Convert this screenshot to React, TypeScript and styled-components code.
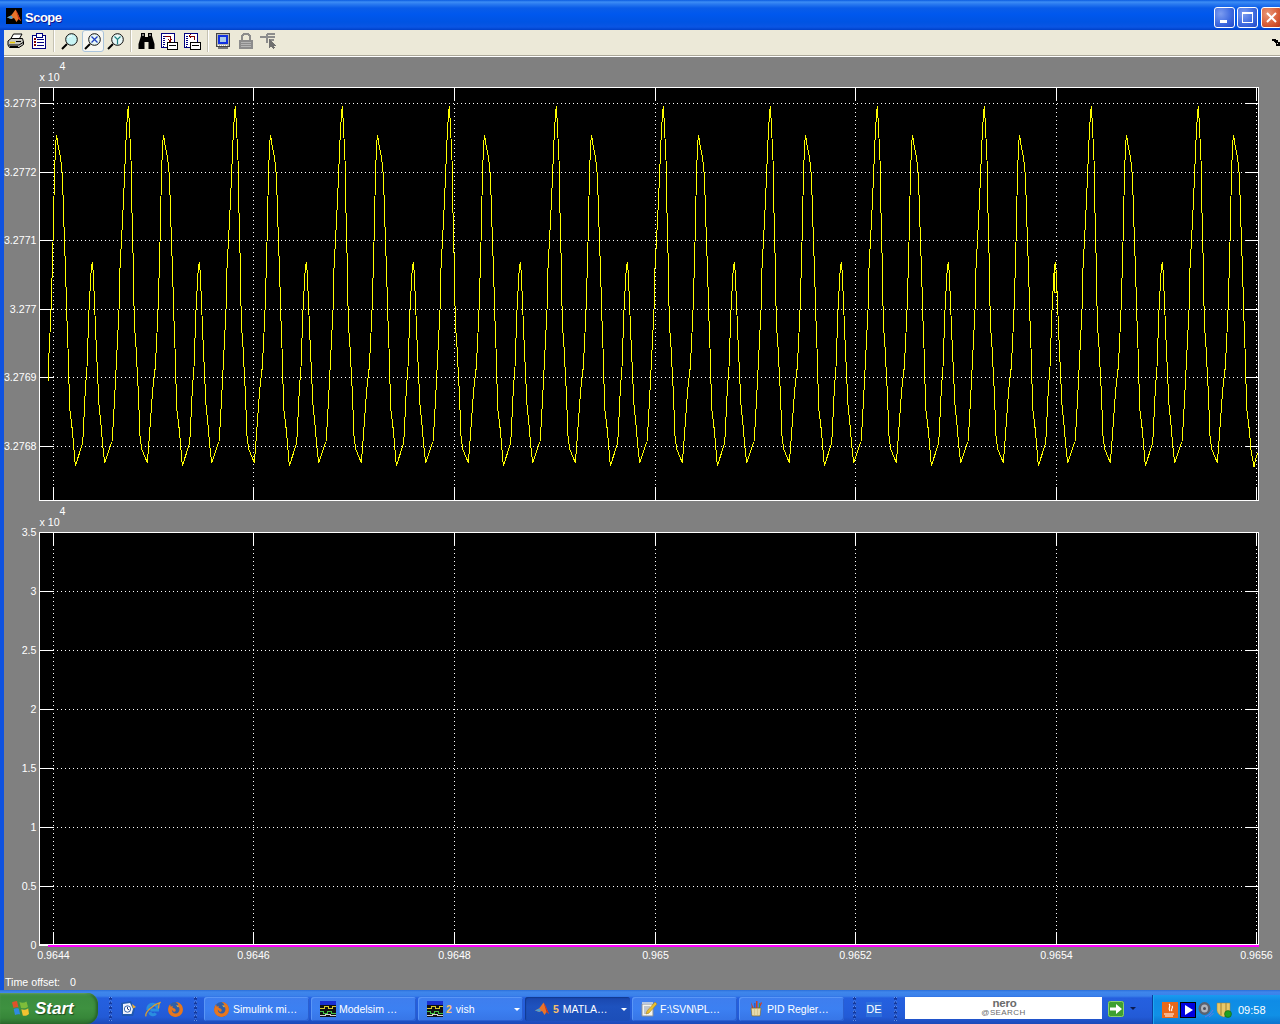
import React from "react";
import styled, { createGlobalStyle } from "styled-components";

const Global = createGlobalStyle`
  html, body { margin: 0; padding: 0; width: 1280px; height: 1024px; overflow: hidden; background: #808080; }
  #root { width: 1280px; height: 1024px; }
  * { box-sizing: border-box; }
`;

const Screen = styled.div`
  width: 1280px; height: 1024px; display: flex; flex-direction: column; overflow: hidden;
  font-family: "Liberation Sans", Arial, sans-serif;
`;
const Win = styled.div`
  height: 990px; display: flex; flex-direction: column;
  border-left: 4px solid #0f52e0;
`;
const TitleBar = styled.div`
  height: 30px; margin-left: -4px; width: 1280px; display: flex; align-items: center; padding: 4px 0 0 6px;
  overflow: hidden;
  background: linear-gradient(#0a5be0 0, #3d8df5 2px, #2a7af0 4px, #0a5ce8 8px, #0058ee 14px, #0054e3 22px, #0a55e4 27px, #0040c8 30px);
`;
const TitleIcon = styled.div`
  margin-top: -2px; display: flex;
`;
const TitleText = styled.span`
  font-size: 13px; font-weight: 700; letter-spacing: -.5px; color: #fff; margin-left: 3px; text-shadow: 1px 1px #0f1089;
`;
const WinButtons = styled.div`
  margin-left: auto; display: flex; gap: 2px; margin-right: -2px; align-items: center;
`;
const WinBtn = styled.div<{ $red?: boolean }>`
  width: 21px; height: 21px; border: 1px solid #fff; border-radius: 3px; display: flex; align-items: center; justify-content: center;
  background: ${p => p.$red
    ? "radial-gradient(circle at 30% 30%, #e8987a, #d9603a 55%, #b8351a)"
    : "radial-gradient(circle at 30% 30%, #7c9cf0, #3f6be0 55%, #2248c8)"};
  margin-left: ${p => (p.$red ? "1px" : "0")};
`;
const ToolBar = styled.div`
  height: 26px; background: #ece9d8; display: flex; align-items: center; padding-bottom: 3px; flex: none;
  border-bottom: 1px solid #aca899; box-shadow: 0 1px 0 #fff; position: relative; z-index: 1;
`;
const ToolBtn = styled.div<{ $active?: boolean }>`
  width: 23px; height: 23px; display: flex; align-items: center; justify-content: center; flex: none;
  ${p => p.$active ? "background:#f7f6f1; border:1px solid #a9c4dc; border-radius:3px; width:22px; height:22px; margin:0 .5px;" : ""}
`;
const ToolSep = styled.div<{ $mr?: number }>`
  width: 2px; height: 22px; background: #c5c2b2; border-right: 1px solid #fff; margin: 0 ${p => p.$mr ?? 3}px 0 3px; flex: none;
`;
const ToolEnd = styled.div`
  margin-left: auto; margin-top: 3px; display: flex; align-items: center;
`;
const ScopeArea = styled.div`
  flex: 1; background: #808080; margin-top: 1px; display: flex; flex-direction: column;
`;
const PlotSvg = styled.svg`
  display: block; flex: none;
  text { font-family: "Liberation Sans", Arial, sans-serif; font-size: 10.67px; fill: #fff; }
`;
const Status = styled.div`
  height: 18px; padding: 4px 0 0 1px; color: #fff; font-size: 10.67px; line-height: 12px; display: flex;
`;
const StatusValue = styled.span`
  margin-left: 10px;
`;
const Taskbar = styled.div`
  height: 34px; width: 1280px; display: flex; align-items: flex-start; position: relative;
  background: linear-gradient(#2c6fd8 0, #3f86ec 2px, #3a80ea 6px, #2560df 8px, #245edc 18px, #225ad6 27px, #1c49b8 34px);
`;
const StartBtn = styled.div`
  width: 98px; height: 31px; margin-top: 3px; flex: none; display: flex; align-items: center; padding-left: 10px; gap: 5px;
  border-radius: 0 11px 12px 0;
  background: linear-gradient(#4e9a50 0, #3c8d3f 12%, #3e9140 50%, #378739 80%, #2d6e30 100%);
  box-shadow: inset -2px 0 3px #255f27, inset 0 1px 1px #7cbc7c;
`;
const StartText = styled.span`
  color: #fff; font-style: italic; font-weight: 700; font-size: 17px; text-shadow: 1px 1px 1px #1c4a1e;
`;
const Grip = styled.div<{ $ml: number }>`
  width: 4px; height: 24px; margin: 7px 0 0 ${p => p.$ml}px; flex: none;
  background-image: radial-gradient(circle at 1.5px 1.5px, #12379c 1.3px, #6f9ef2 1.4px, transparent 2px);
  background-size: 4px 4.6px;
`;
const Quick = styled.div<{ $ml: number }>`
  width: 16px; height: 16px; margin: 11px 0 0 ${p => p.$ml}px; flex: none; display: flex;
`;
const TaskBtn = styled.div<{ $active?: boolean; $ml?: number }>`
  width: 105px; height: 24px; margin: 7px 0 0 ${p => p.$ml ?? 2}px; flex: none; display: flex; align-items: center; padding-left: 9px;
  border-radius: 3px; color: #fff; font-size: 10.5px; white-space: nowrap; position: relative;
  background: ${p => p.$active ? "linear-gradient(#1a47ad, #1e52be 40%, #1c4eb8)" : "linear-gradient(#3f7eee, #3c80f2 50%, #3775e6)"};
  box-shadow: ${p => p.$active ? "inset 1px 1px 1px #123a90" : "inset 1px 1px 0 #5a96f6, inset -1px -1px 0 #2a5fd0"};
`;
const TaskLabel = styled.span`
  margin-left: 3px;
`;
const Count = styled.b`
  color: #f9c06a; font-weight: 700; margin-right: 4px; margin-left: 3px;
`;
const Caret = styled.i`
  position: absolute; right: 3px; top: 11px; width: 0; height: 0;
  border-left: 3px solid transparent; border-right: 3px solid transparent; border-top: 3px solid #fff;
`;
const Lang = styled.div`
  width: 16px; height: 15px; margin: 12px 0 0 9px; flex: none; background: #2f6fdc; color: #fff; font-size: 11px; line-height: 15px; text-align: center;
`;
const NeroBox = styled.div`
  width: 197px; height: 22px; margin: 7px 0 0 7px; background: #fff; flex: none; display: flex; flex-direction: column; align-items: center; justify-content: center; color: #6a6a6a;
`;
const NeroTop = styled.span`
  font-size: 11.5px; font-weight: 700; line-height: 9px; letter-spacing: -.2px; margin-left: 2px;
`;
const NeroBottom = styled.span`
  font-size: 8px; line-height: 9px; letter-spacing: .4px;
`;
const GoArrow = styled.div`
  width: 16px; height: 16px; margin: 11px 0 0 6px; flex: none;
`;
const SmallCaret = styled.i`
  width: 0; height: 0; margin: 17px 0 0 6px; flex: none;
  border-left: 3px solid transparent; border-right: 3px solid transparent; border-top: 3px solid #0a1a50;
`;
const Tray = styled.div`
  margin: 5px 0 0 auto; width: 128px; height: 29px; display: flex; align-items: center; padding-left: 9px; gap: 2px;
  background: linear-gradient(#1a9af0, #0f8ce6 20%, #1090e6 70%, #0c74ce);
  border-left: 1px solid #0a3fa0; box-shadow: inset 1px 0 0 #1ea8f0;
`;
const Clock = styled.span`
  color: #fff; font-size: 11px; margin-left: 4px;
`;
const Ico = styled.svg`
  display: block; flex: none;
`;

/* icons */
const MatlabLogo = ({ size = 16, bg = false }: { size?: number; bg?: boolean }) => (
  <Ico width={size} height={size} viewBox="0 0 16 16">
    {bg && <rect width="16" height="16" fill="#000" />}
    <path d="M1 9.500L5 7.500 7 5 9.500 1.500 11.500 5 15 13 12.500 11 10.500 14 8 10 5.500 11z" fill="#e8742a" />
    <path d="M1 9.500L5 7.500 7 9 5.500 11z" fill="#4d9fd0" />
    <path d="M9.500 1.500L11.500 5 15 13 12.500 11 11 6z" fill="#c8301a" />
  </Ico>
);
const Firefox = () => (
  <Ico width="17" height="17" viewBox="0 0 16 16">
    <circle cx="8" cy="8" r="7" fill="#2f5fa8" />
    <path d="M8 1C12 1 15 4 15 8S12 15 8 15 1 12 1 8C1 6 2 4 3 3L3.500 5.500 5.500 4.500C4.500 7 6 6.500 7 7S9 9 7.500 10 5 8.500 4.500 8C4.500 11 7 12.500 9.500 11.500S12.500 7 10.500 5C11 3.500 10 2 8 1z" fill="#e8761e" />
    <path d="M8.500 4L11 4.500 10.500 6z" fill="#f8c040" />
  </Ico>
);
const IE = () => (
  <Ico width="17" height="17" viewBox="0 0 16 16">
    <path d="M3.500 8.500A4.700 4.700 0 1 1 12.800 8.500H6M5.500 10.500A3 3 0 0 0 11 11.500" fill="none" stroke="#2a8fe0" strokeWidth="2.800" />
    <path d="M2 14.500C0 11 9 3 15 1.500 13 4 14.500 5 13.500 7" fill="none" stroke="#d8a030" strokeWidth="1.200" />
  </Ico>
);
const Desk = () => (
  <Ico width="16" height="16" viewBox="0 0 16 16">
    <path d="M1 2L11 0 15 8 13 15 2 15z" fill="#1f58b0" />
    <path d="M3 3L10 2 13 8 11.500 13 3 13z" fill="#eef2fa" />
    <circle cx="7.500" cy="8" r="3.200" fill="#fff" stroke="#3a6ab0" />
    <path d="M7.500 5.800V8L9.300 9" fill="none" stroke="#203a80" />
    <path d="M12 3L16 6 13 7.500z" fill="#f0b030" />
  </Ico>
);
const ModelSim = () => (
  <Ico width="16" height="16" viewBox="0 0 16 16" shapeRendering="crispEdges">
    <rect width="16" height="16" fill="#111" />
    <rect width="16" height="4" y="0" fill="#1a2fd0" />
    <path d="M0 7H4V5H8V7H12V5H16" fill="none" stroke="#d8c830" />
    <path d="M0 10H3V12H7V10H11V12H16" fill="none" stroke="#40c040" />
    <path d="M0 14H5V13H10V14H16" fill="none" stroke="#d0d0d0" />
  </Ico>
);
const Notepad = () => (
  <Ico width="16" height="16" viewBox="0 0 16 16">
    <path d="M1 3H12V15H1z" fill="#f4f4ee" stroke="#8a9098" />
    <path d="M3 6H9M3 8H8M3 10H7M3 12H8" stroke="#8898b0" />
    <path d="M1 3H12V1H1z" fill="#b8c8e0" />
    <path d="M14 1L16 3 8 12 5 13 6 10z" fill="#e8c030" stroke="#a07820" strokeWidth=".5" />
  </Ico>
);
const Paint = () => (
  <Ico width="16" height="16" viewBox="0 0 16 16">
    <path d="M3 1L6 8H4zM8 0H9.500V8H8zM13 1L14 2 11 8H10z" fill="#d04020" />
    <path d="M6 2H7.500V8H6z" fill="#3060c0" />
    <path d="M11 2H12V8H11z" fill="#40a040" />
    <path d="M3 7H13L12 15H4z" fill="#d8c890" stroke="#806a30" strokeWidth=".6" />
    <path d="M5 8V14M8 8V14M11 8V14" stroke="#f4ecc8" />
  </Ico>
);
const NeroGo = () => (
  <Ico width="16" height="16" viewBox="0 0 16 16">
    <rect width="16" height="16" rx="2" fill="#3ea030" />
    <rect x=".5" y=".5" width="15" height="15" rx="2" fill="none" stroke="#8ad070" />
    <path d="M2 6.500H8V3L14 8 8 13V9.500H2z" fill="#fff" />
  </Ico>
);
const Flag = () => (
  <Ico width="20" height="20" viewBox="0 0 20 20">
    <path d="M7 2C5 2 3 3 2 3.500L3.500 9C5 8 7 8 8.500 8.500z" fill="#e0512a" />
    <path d="M9.500 3C11.500 4 14 4 16.500 2.500L18 8C16 9.500 13 9.500 11 9z" fill="#7ebd3a" />
    <path d="M8.700 9.500C7 9 5 9 3.700 10L5 16C7 15 8.500 15 10.200 15.500z" fill="#2f8ae0" />
    <path d="M11.300 10.300C13 11 16 11 18.200 9.200L19 15C17 17 14 17 12.800 16.500z" fill="#f2c230" />
  </Ico>
);
const Printer = () => (
  <Ico width="17" height="16" viewBox="0 0 17 16">
    <path d="M6.500 1H15L12.500 5.500H4z" fill="#fff" stroke="#000" />
    <path d="M1 8L4 5.500H15.500L16.500 9V11.500L12 14.500H2.500L1 12z" fill="#c8c8c0" stroke="#000" />
    <path d="M2 12H12L16 9.500" fill="none" stroke="#000" />
    <path d="M3 9.500H8" stroke="#e8c800" strokeWidth="1.500" />
    <path d="M9 8.500H14M3 13.500H11" stroke="#000" />
  </Ico>
);
const Clip = () => (
  <Ico width="16" height="16" viewBox="0 0 16 16" shapeRendering="crispEdges">
    <path d="M1.500 2.500H14.500V15.500H1.500z" fill="#fff" stroke="#000080" />
    <path d="M5 .5H11V4H5z" fill="#fff" stroke="#000080" />
    <path d="M3 6H5M3 9H5M3 12H5" stroke="#800000" strokeWidth="2" />
    <path d="M6 6H13M6 9H13M6 12H13" stroke="#000080" />
  </Ico>
);
const Mag = ({ mark }: { mark?: "x" | "y" }) => (
  <Ico width="17" height="17" viewBox="0 0 17 17">
    <circle cx="10.500" cy="6.500" r="5.800" fill={mark ? "#e8f8f8" : "#c8f4f4"} stroke="#0a0a0a" />
    {!mark && <path d="M7 5A4 4 0 0 1 11 3" fill="none" stroke="#fff" />}
    <path d="M6 11L1 16" stroke="#000" strokeWidth="2" />
    {mark === "x" && <path d="M7.500 3.500L13.500 9.500M13.500 3.500L7.500 9.500" stroke="#2040c0" strokeWidth="1.300" />}
    {mark === "y" && <path d="M7.500 3.500L10.500 6.500 13.500 3.500M10.500 6.500V11.500" stroke="#208080" fill="none" strokeWidth="1.200" />}
  </Ico>
);
const Binoc = () => (
  <Ico width="17" height="16" viewBox="0 0 17 16">
    <path d="M3 0H7V4H10V0H14V3L16.500 11V16H10.500V9H6.500V16H.5V11L3 3z" fill="#000" />
    <path d="M4 2H6M11 2H13" stroke="#fff" />
  </Ico>
);
const DocArrow = ({ back }: { back?: boolean }) => (
  <Ico width="17" height="17" viewBox="0 0 17 17" shapeRendering="crispEdges">
    <path d="M.5 .5H13.500V14.500H.5z" fill="#fff" stroke="#000080" />
    <path d="M2 3V13H3V3M2 3H4M2 5H3M2 7H3M2 9H3M2 11H3" stroke="#000080" strokeDasharray="1 1" fill="none" />
    {back
      ? <path d="M10 7V3H5M7 1L5 3 7 5" fill="none" stroke="#800000" strokeWidth="1" />
      : <path d="M4 3H9V8M7 6L9 8.500 11 6" fill="none" stroke="#800000" strokeWidth="1" />}
    <path d="M6.500 9.500H16.500V16H6.500z" fill="#fff" stroke="#000" />
    <path d="M8 12H15" stroke="#000" />
  </Ico>
);
const Monitor = () => (
  <Ico width="16" height="17" viewBox="0 0 16 17" shapeRendering="crispEdges">
    <path d="M1.500 .5H14.500V13.500H1.500z" fill="#b8b8b0" stroke="#444" />
    <rect x="3" y="2" width="10" height="9" fill="#1030e0" />
    <rect x="5" y="4" width="6" height="5" fill="#a8c8e8" />
    <path d="M3 12H13" stroke="#fff" strokeDasharray="1 1" />
    <rect x="3" y="14" width="10" height="2" fill="#777" />
  </Ico>
);
const Lock = () => (
  <Ico width="16" height="16" viewBox="0 0 16 16" shapeRendering="crispEdges">
    <path d="M4 7V3L6 1H10L12 3V7" fill="none" stroke="#8c8c8c" strokeWidth="2.500" />
    <rect x="1" y="7" width="14" height="9" fill="#8c8c8c" />
    <path d="M3 9H13M3 11H13M3 13H13" stroke="#b4b4b4" />
  </Ico>
);
const Pointer = () => (
  <Ico width="17" height="16" viewBox="0 0 17 16" shapeRendering="crispEdges">
    <path d="M0 4H15M7 1H15M7 1V10M9 7H14" stroke="#8c8c8c" strokeWidth="2" fill="none" />
    <path d="M9 6L16.500 12.500 13.500 13 15 15 13.500 16 11.500 13.500 9 15.500z" fill="#707070" />
  </Ico>
);
const Java = () => (
  <Ico width="16" height="16" viewBox="0 0 16 16">
    <rect width="16" height="16" fill="#e8681a" />
    <path d="M2 12H12M3 14H11" stroke="#fff" />
    <path d="M7 2C10 4 5 6 8 9M10 4C12 6 8 7 10 9" fill="none" stroke="#fff" strokeWidth="1.200" />
  </Ico>
);
const PlayTray = () => (
  <Ico width="16" height="16" viewBox="0 0 16 16" shapeRendering="crispEdges">
    <rect width="16" height="16" fill="#000" />
    <rect x="1" y="1" width="14" height="14" fill="#0000e0" />
    <path d="M5 3L13 8 5 13z" fill="#fff" shapeRendering="auto" />
  </Ico>
);
const Speaker = () => (
  <Ico width="16" height="16" viewBox="0 0 16 16">
    <ellipse cx="6.500" cy="6.500" rx="6" ry="6.500" fill="#5a6270" />
    <ellipse cx="6.500" cy="6.500" rx="3.500" ry="4" fill="#b0b4bc" />
    <circle cx="6.500" cy="6.500" r="1.500" fill="#4a505c" />
    <path d="M7 15Q13 13 15 8M11 15Q14 13 15.500 11" fill="none" stroke="#6a78e0" />
  </Ico>
);
const Shield = () => (
  <Ico width="16" height="16" viewBox="0 0 16 16">
    <path d="M1 1H14V9Q13 13 7.500 15 2 13 1 9z" fill="#e8c868" stroke="#a08030" strokeWidth=".5" />
    <path d="M5 1V13M10 1V11" stroke="#a08030" />
    <circle cx="12" cy="12" r="3.500" fill="#20a020" stroke="#0a500a" strokeWidth=".5" />
  </Ico>
);

/* trace: one 107px period, starting from a trough */
const period: [number, number][] = [
  [75.3, 466], [82.7, 443], [84, 417], [85.3, 390], [87, 367], [89, 310], [91, 273], [92.3, 262],
  [93.3, 273], [96, 340], [99, 405], [101, 425], [102.7, 445], [104.7, 462.7],
  [110, 447], [112, 441.7], [113.3, 423], [115, 390], [117, 350], [119, 310], [120, 268], [122.3, 225],
  [124.3, 182], [126, 140], [127.3, 117], [128.3, 106],
  [129.3, 123], [131, 160], [132.3, 228], [133.3, 263], [134.3, 323], [136, 347], [138.3, 392], [140, 436], [141.7, 449],
  [147.3, 462.7], [148.7, 446], [150.7, 417], [152.7, 390], [155.3, 367], [157, 333], [158.3, 303], [160, 242],
  [161.3, 182], [162.3, 152], [163.3, 135], [164.3, 139], [165.3, 147], [166.7, 153], [168, 162], [169, 172],
  [170.3, 202], [171.3, 237], [172.7, 275], [173.7, 312], [175, 348], [176.7, 408], [179.3, 430], [181, 450],
];
const tracePts = (() => {
  const pts: string[] = ["48.3,381"];
  period.filter(p => p[0] >= 155.3).forEach(p => pts.push(`${(p[0] - 107).toFixed(1)},${p[1]}`));
  for (let k = 0; k < 11; k++) {
    period.forEach(p => pts.push(`${(p[0] + k * 107).toFixed(1)},${p[1]}`));
  }
  pts.push("1254,466.7", "1256,458", "1259,450");
  return pts.join(" ");
})();

const GRID_X = [53.5, 253.5, 454.5, 655.5, 855.5, 1056.5, 1256.5];
const X_LABELS = ["0.9644", "0.9646", "0.9648", "0.965", "0.9652", "0.9654", "0.9656"];

type PlotProps = {
  y0: number; h: number; top: number; bottom: number;
  ticks: { y: number; label: string }[];
  xLabels?: boolean;
  children?: React.ReactNode;
};
const Plot = ({ y0, h, top, bottom, ticks, xLabels, children }: PlotProps) => (
  <PlotSvg width="1276" height={h} viewBox={`4 ${y0} 1276 ${h}`}>
    <g shapeRendering="crispEdges" stroke="#fff" fill="none">
      <rect x="39.5" y={top + 0.5} width="1219" height={bottom - top} fill="#000" />
      {ticks.map(t => (
        <g key={t.label}>
          <path d={`M53 ${t.y + 0.5}H1246`} strokeDasharray="1 3" />
          <path d={`M40 ${t.y + 0.5}H53M1245 ${t.y + 0.5}H1258`} />
        </g>
      ))}
      {GRID_X.map(x => (
        <g key={x}>
          <path d={`M${x} ${top + 13}V${bottom - 13}`} strokeDasharray="1 3" />
          <path d={`M${x} ${top}V${top + 13}M${x} ${bottom - 13}V${bottom}`} />
        </g>
      ))}
    </g>
    {children}
    {ticks.map(t => (
      <text key={t.label} x="36.500" y={t.y + 4} textAnchor="end">{t.label}</text>
    ))}
    <text x="39.500" y={top - 6}>x 10</text>
    <text x="59.500" y={top - 17}>4</text>
    {xLabels && X_LABELS.map((l, i) => (
      <text key={l} x={GRID_X[i]} y={bottom + 14} textAnchor="middle">{l}</text>
    ))}
  </PlotSvg>
);

const TICKS_A = ["3.2773", "3.2772", "3.2771", "3.277", "3.2769", "3.2768"].map((label, i) => ({ y: Math.round(103 + i * 68.6), label }));
const TICKS_B = ["3.5", "3", "2.5", "2", "1.5", "1", "0.5", "0"].map((label, i) => ({ y: Math.round(532 + i * 59), label }));

export default function App() {
  return (
    <Screen>
      <Global />
      <Win>
        <TitleBar>
          <TitleIcon><MatlabLogo bg /></TitleIcon>
          <TitleText>Scope</TitleText>
          <WinButtons>
            <WinBtn>
              <Ico width="13" height="13" viewBox="0 0 13 13" shapeRendering="crispEdges"><rect x="2" y="9" width="7" height="3" fill="#fff" /></Ico>
            </WinBtn>
            <WinBtn>
              <Ico width="13" height="13" viewBox="0 0 13 13" shapeRendering="crispEdges"><path d="M1.500 2.500H11.500V11.500H1.500z" fill="none" stroke="#fff" /><rect x="1" y="1" width="11" height="2" fill="#fff" /></Ico>
            </WinBtn>
            <WinBtn $red>
              <Ico width="13" height="13" viewBox="0 0 13 13"><path d="M2 2L11 11M11 2L2 11" stroke="#fff" strokeWidth="2" /></Ico>
            </WinBtn>
          </WinButtons>
        </TitleBar>
        <ToolBar>
          <ToolBtn><Printer /></ToolBtn>
          <ToolBtn><Clip /></ToolBtn>
          <ToolSep />
          <ToolBtn><Mag /></ToolBtn>
          <ToolBtn $active><Mag mark="x" /></ToolBtn>
          <ToolBtn><Mag mark="y" /></ToolBtn>
          <ToolSep />
          <ToolBtn><Binoc /></ToolBtn>
          <ToolBtn><DocArrow /></ToolBtn>
          <ToolBtn><DocArrow back /></ToolBtn>
          <ToolSep $mr={2} />
          <ToolBtn><Monitor /></ToolBtn>
          <ToolBtn><Lock /></ToolBtn>
          <ToolBtn><Pointer /></ToolBtn>
          <ToolEnd>
            <Ico width="8" height="7" viewBox="0 0 8 7" shapeRendering="crispEdges"><path d="M0 1H3V0M1 1L6 6M4 6H7V3M3 2H5V4" fill="none" stroke="#000" strokeWidth="1.100" /></Ico>
          </ToolEnd>
        </ToolBar>
        <ScopeArea>
          <Plot y0={57} h={448} top={87} bottom={500} ticks={TICKS_A}>
            <defs>
              <clipPath id="plotClip"><rect x="40" y="88" width="1218" height="412" /></clipPath>
            </defs>
            <g clipPath="url(#plotClip)" fill="none" stroke="#ffff00" strokeWidth="1" shapeRendering="crispEdges">
              <polyline points={tracePts} />
              <path d="M1054.500 272V292H1056.500V272z" />
            </g>
          </Plot>
          <Plot y0={505} h={467} top={532} bottom={945} ticks={TICKS_B} xLabels>
            <rect x="40" y="944" width="1219" height="1" fill="#fff" />
            <rect x="48" y="945" width="1211" height="2" fill="#ff00ff" />
          </Plot>
          <Status>Time offset:<StatusValue>0</StatusValue></Status>
        </ScopeArea>
      </Win>
      <Taskbar>
        <StartBtn><Flag /><StartText>Start</StartText></StartBtn>
        <Grip $ml={11} />
        <Quick $ml={7}><Desk /></Quick>
        <Quick $ml={8}><IE /></Quick>
        <Quick $ml={7}><Firefox /></Quick>
        <Grip $ml={11} />
        <TaskBtn $ml={6}><Firefox /><TaskLabel>Simulink mi…</TaskLabel></TaskBtn>
        <TaskBtn><ModelSim /><TaskLabel>Modelsim …</TaskLabel></TaskBtn>
        <TaskBtn><ModelSim /><Count>2</Count>vish<Caret /></TaskBtn>
        <TaskBtn $active><MatlabLogo /><Count>5</Count>MATLA…<Caret /></TaskBtn>
        <TaskBtn><Notepad /><TaskLabel>F:\SVN\PL…</TaskLabel></TaskBtn>
        <TaskBtn><Paint /><TaskLabel>PID Regler…</TaskLabel></TaskBtn>
        <Grip $ml={9} />
        <Lang>DE</Lang>
        <Grip $ml={12} />
        <NeroBox>
          <NeroTop>nero</NeroTop>
          <NeroBottom>@SEARCH</NeroBottom>
        </NeroBox>
        <GoArrow><NeroGo /></GoArrow>
        <SmallCaret />
        <Tray>
          <Java />
          <PlayTray />
          <Speaker />
          <Shield />
          <Clock>09:58</Clock>
        </Tray>
      </Taskbar>
    </Screen>
  );
}
